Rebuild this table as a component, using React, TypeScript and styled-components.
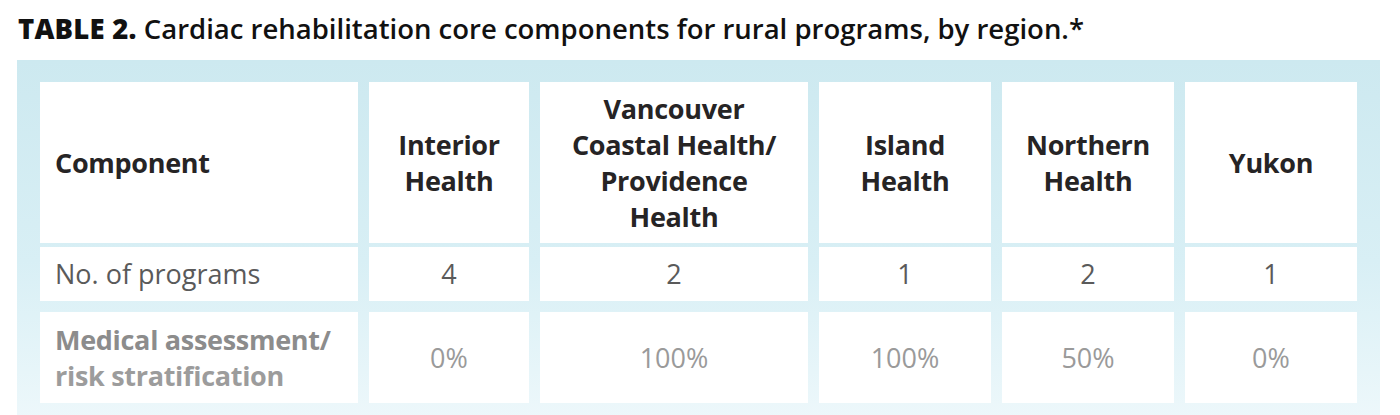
import React from "react";
import styled, { createGlobalStyle } from "styled-components";

const Global = createGlobalStyle`
  html, body { margin: 0; padding: 0; background: #ffffff; }
  body { font-family: "Open Sans", "Noto Sans", sans-serif; }
`;

const Page = styled.div`
  width: 1400px;
  height: 415px;
  overflow: hidden;
  padding-left: 17px;
  box-sizing: border-box;
`;

const Title = styled.h1`
  margin: 0;
  padding: 11px 0 0 1px;
  height: 50px;
  box-sizing: border-box;
  font-size: 27.5px;
  line-height: 36px;
  font-weight: 600;
  color: #111;
  letter-spacing: 0;
  white-space: nowrap;
`;

const Label = styled.span`
  font-weight: 800;
  letter-spacing: 0.2px;
`;

const Panel = styled.div`
  width: 1363px;
  height: 365px;
  margin-top: 10px;
  box-sizing: border-box;
  padding: 22px 23px 0 23px;
  background: linear-gradient(180deg, #cde9f0 0%, #d8eff5 55%, #eef8fb 100%);
`;

const Grid = styled.div`
  display: grid;
  grid-template-columns: 318px 160px 268px 172px 172px 172px;
  grid-template-rows: 161px 58px 102px;
  column-gap: 11px;
`;

const Cell = styled.div<{ $row: number; $align?: "left" | "center" }>`
  background: #ffffff;
  display: flex;
  flex-direction: column;
  justify-content: center;
  align-items: ${(p) => (p.$align === "left" ? "flex-start" : "center")};
  text-align: ${(p) => (p.$align === "left" ? "left" : "center")};
  padding-left: ${(p) => (p.$align === "left" ? "15px" : "0")};
  margin-top: ${(p) => (p.$row === 1 ? "4px" : p.$row === 2 ? "11px" : "0")};
  font-size: 27px;
  line-height: 36px;
  box-sizing: border-box;
`;

const HeadText = styled.div`
  font-weight: 700;
  color: #262425;
  letter-spacing: -0.3px;
`;

const CountText = styled.div`
  font-weight: 400;
  color: #5a5a5a;
`;

const MedLabel = styled.div`
  font-weight: 700;
  color: #8c8c8c;
  letter-spacing: -0.3px;
`;

const MedLabelLight = styled.span`
  color: #9c9c9c;
`;

const PctText = styled.div`
  font-weight: 400;
  color: #9a9a9a;
`;

const regions = [
  ["Interior", "Health"],
  ["Vancouver", "Coastal Health/", "Providence", "Health"],
  ["Island", "Health"],
  ["Northern", "Health"],
  ["Yukon"],
];
const counts = ["4", "2", "1", "2", "1"];
const pcts = ["0%", "100%", "100%", "50%", "0%"];

export default function App() {
  return (
    <Page>
      <Global />
      <Title>
        <Label>TABLE 2.</Label> Cardiac rehabilitation core components for rural programs, by region.*
      </Title>
      <Panel>
        <Grid>
          <Cell $row={0} $align="left">
            <HeadText>Component</HeadText>
          </Cell>
          {regions.map((lines, i) => (
            <Cell $row={0} key={"h" + i}>
              <HeadText>
                {lines.map((l, j) => (
                  <div key={j}>{l}</div>
                ))}
              </HeadText>
            </Cell>
          ))}
          <Cell $row={1} $align="left">
            <CountText>No. of programs</CountText>
          </Cell>
          {counts.map((c, i) => (
            <Cell $row={1} key={"c" + i}>
              <CountText>{c}</CountText>
            </Cell>
          ))}
          <Cell $row={2} $align="left">
            <MedLabel>
              Medical assessment/
              <br />
              <MedLabelLight>risk stratification</MedLabelLight>
            </MedLabel>
          </Cell>
          {pcts.map((c, i) => (
            <Cell $row={2} key={"p" + i}>
              <PctText>{c}</PctText>
            </Cell>
          ))}
        </Grid>
      </Panel>
    </Page>
  );
}
